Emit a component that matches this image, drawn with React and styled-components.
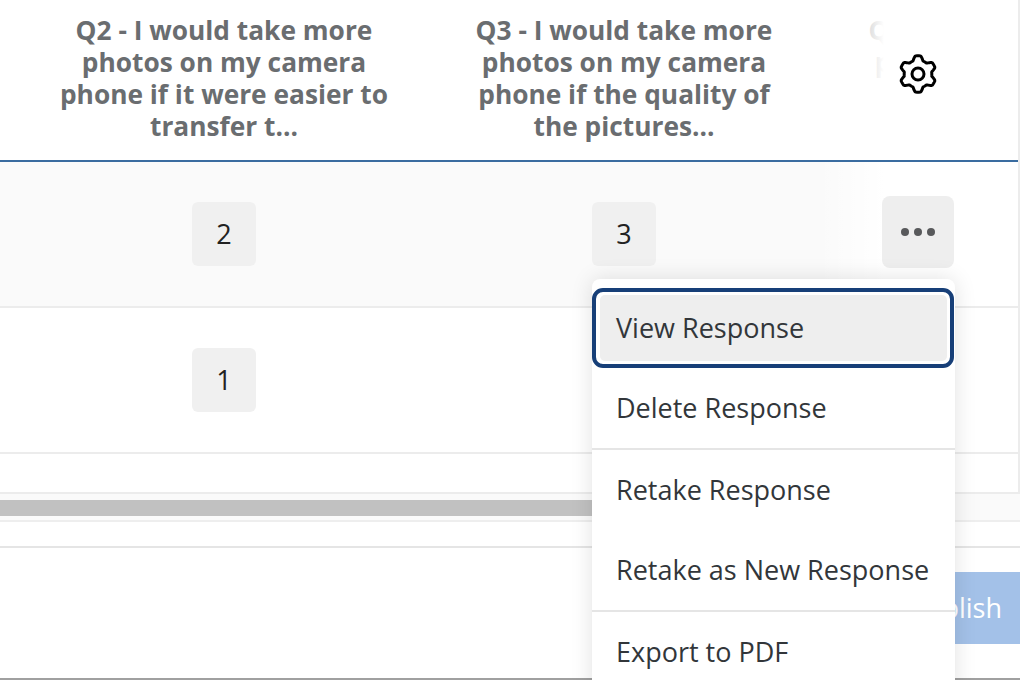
import React from "react";
import styled, { createGlobalStyle } from "styled-components";

const Global = createGlobalStyle`
  html, body { margin: 0; padding: 0; background: #fff; }
  * { box-sizing: border-box; }
`;

const Page = styled.div`
  position: relative;
  width: 1020px;
  height: 680px;
  overflow: hidden;
  display: flex;
  flex-direction: column;
  background: #fff;
  font-family: "Open Sans", "Noto Sans", sans-serif;
`;
const Table = styled.div`
  width: 1020px;
  border-right: 2px solid #ececec;
  border-bottom: 2px solid #ececec;
  overflow: hidden;
`;
const Row = styled.div`
  position: relative;
  display: grid;
  grid-template-columns: 24px 400px 400px 400px;
  height: ${(p) => p.$height}px;
  background: ${(p) => p.$bg || "#fff"};
  border-bottom: 2px solid ${(p) => p.$line || "#ececec"};
`;
const Spacer = styled.div`
  height: 38px;
`;
const HeaderCell = styled.div`
  grid-column: ${(p) => p.$col};
  padding: 14px ${(p) => p.$right || 33}px 0 33px;
  text-align: center;
  font-size: 26.3px;
  line-height: 32px;
  font-weight: 700;
  color: #6a6d70;
`;
const ValueCell = styled.div`
  grid-column: ${(p) => p.$col};
  display: flex;
  align-items: center;
  justify-content: center;
`;
const Badge = styled.span`
  display: flex;
  align-items: center;
  justify-content: center;
  width: 64px;
  height: 64px;
  padding-bottom: 2px;
  border-radius: 6px;
  background: #f0f0f0;
  color: #222;
  font-size: 27px;
`;
const ActionCell = styled.div`
  position: absolute;
  top: 0;
  bottom: 0;
  right: 0;
  width: 200px;
  display: flex;
  align-items: ${(p) => (p.$header ? "flex-start" : "center")};
  justify-content: center;
  padding-top: ${(p) => (p.$header ? "52px" : "0")};
  background: linear-gradient(to right, rgba(255, 255, 255, 0) 0, #fff 66px);
`;
const GearIcon = styled.svg`
  display: block;
  width: 44px;
  height: 44px;
  fill: none;
  stroke: #000;
  stroke-width: 3;
  stroke-linejoin: round;
`;
const MoreButton = styled.div`
  width: 72px;
  height: 72px;
  margin-bottom: 4px;
  border-radius: 8px;
  background: #eeeeee;
  display: flex;
  align-items: center;
  justify-content: center;
  gap: 5px;
`;
const Dot = styled.span`
  width: 8px;
  height: 8px;
  border-radius: 50%;
  background: #58595b;
`;
const Track = styled.div`
  height: 26px;
  padding-top: 6px;
  background: #fafafa;
`;
const Thumb = styled.div`
  width: 700px;
  height: 16px;
  background: #c1c1c1;
`;
const Band = styled.div`
  height: 28px;
  border-top: 2px solid #eeeeee;
  border-bottom: 2px solid #e5e5e5;
  background: #fff;
`;
const Footer = styled.div`
  flex: 1;
  display: flex;
  justify-content: flex-end;
  align-items: flex-start;
  padding-top: 24px;
  border-bottom: 2px solid #a0a0a0;
`;
const Publish = styled.div`
  height: 72px;
  padding: 0 18px 2px 40px;
  display: flex;
  align-items: center;
  background: #a3c1e8;
  color: #fff;
  font-size: 27px;
`;
const Menu = styled.div`
  position: absolute;
  left: 592px;
  top: 279px;
  width: 363px;
  height: 420px;
  padding-top: 9px;
  border-radius: 8px;
  background: #fff;
  box-shadow: 0 0 22px rgba(0, 0, 0, 0.12);
  color: #32363a;
  font-size: 27px;
`;
const Item = styled.div`
  height: 80px;
  display: flex;
  align-items: center;
  padding: 0 0 2px 24px;
`;
const FocusedItem = styled(Item)`
  position: relative;
  margin: 7px 8px 7px 8px;
  height: 66px;
  padding-left: 16px;
  background: #eeeeee;
  border-radius: 5px;
  &::after {
    content: "";
    position: absolute;
    inset: -7px -7px -7px -8px;
    border: 4px solid #173f78;
    border-radius: 11px;
  }
`;
const Divider = styled.div`
  height: 2px;
  background: #e5e5e5;
`;

const gearPath = Array.from({ length: 144 }, (_, i) => {
  const t = (i / 144) * Math.PI * 2;
  const wave = Math.max(-1, Math.min(1, 1.6 * Math.cos(6 * t)));
  const r = 16 + 2.2 * wave;
  const x = 22 + r * Math.sin(t);
  const y = 22 - r * Math.cos(t);
  return `${i ? "L" : "M"}${x.toFixed(2)} ${y.toFixed(2)}`;
}).join(" ") + " Z";

export default function App() {
  return (
    <Page>
      <Global />
      <Table>
        <Row $height={162} $line="#3a6ca0">
          <HeaderCell $col={2}>Q2 - I would take more photos on my camera phone if it were easier to transfer t...</HeaderCell>
          <HeaderCell $col={3}>Q3 - I would take more photos on my camera phone if the quality of the pictures...</HeaderCell>
          <HeaderCell $col={4} $right={47}>Q4 - I would take more photos on my camera</HeaderCell>
          <ActionCell $header>
            <GearIcon viewBox="0 0 44 44">
              <path d={gearPath} />
              <circle cx="22" cy="22" r="6" />
            </GearIcon>
          </ActionCell>
        </Row>
        <Row $height={146} $bg="#fafafa">
          <ValueCell $col={2}><Badge>2</Badge></ValueCell>
          <ValueCell $col={3}><Badge>3</Badge></ValueCell>
          <ActionCell>
            <MoreButton><Dot /><Dot /><Dot /></MoreButton>
          </ActionCell>
        </Row>
        <Row $height={146}>
          <ValueCell $col={2}><Badge>1</Badge></ValueCell>
        </Row>
        <Spacer />
      </Table>
      <Track><Thumb /></Track>
      <Band />
      <Footer>
        <Publish>Publish</Publish>
      </Footer>
      <Menu>
        <FocusedItem>View Response</FocusedItem>
        <Item>Delete Response</Item>
        <Divider />
        <Item>Retake Response</Item>
        <Item>Retake as New Response</Item>
        <Divider />
        <Item>Export to PDF</Item>
      </Menu>
    </Page>
  );
}
